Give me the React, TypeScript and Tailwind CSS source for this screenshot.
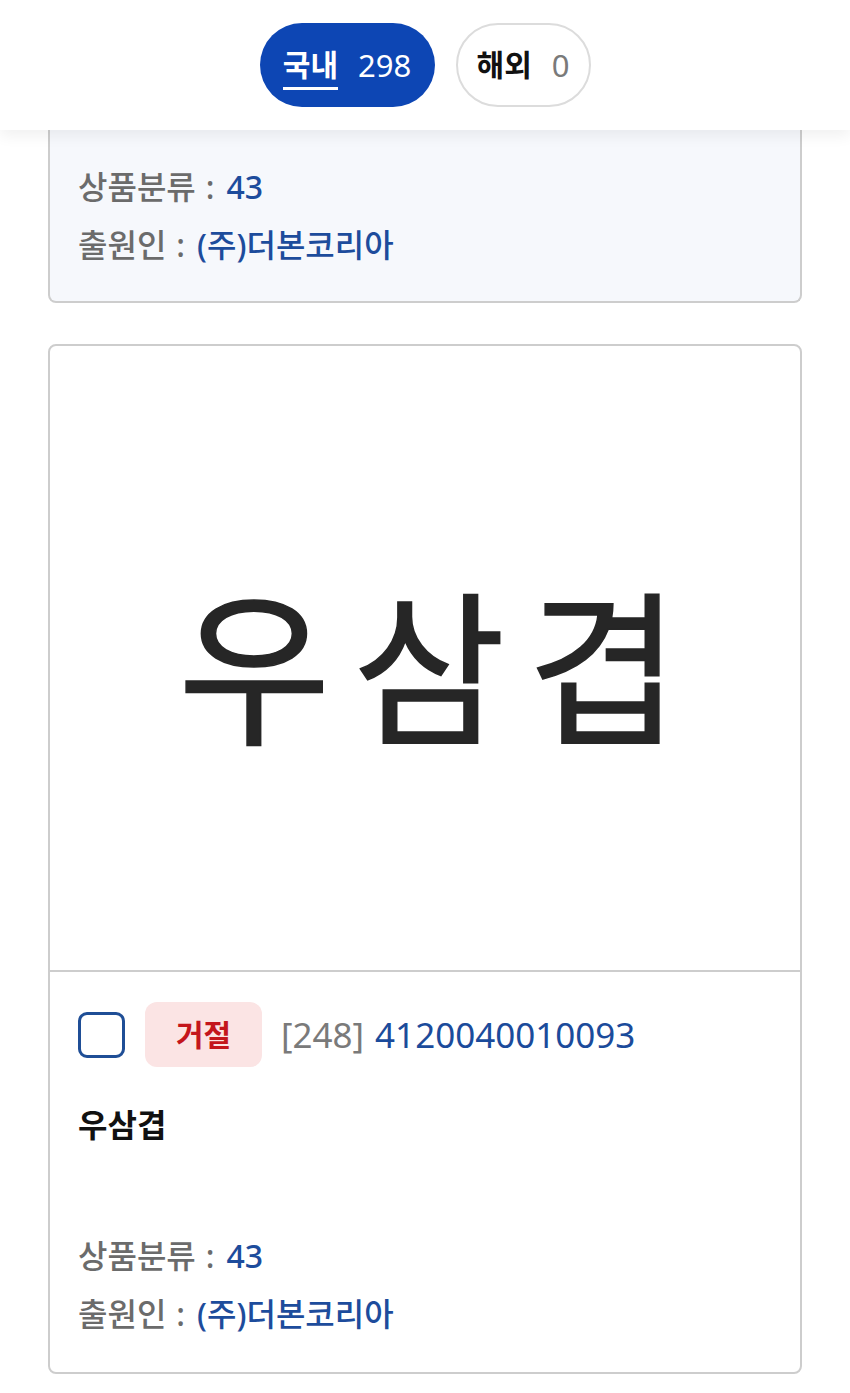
const font = "font-['Noto_Sans','Noto_Sans_CJK_KR',sans-serif]";

function Row({ label, value }: { label: string; value: string }) {
  return (
    <p className="flex items-center">
      <span className="text-[#6b6b6b]">{label}</span>
      <span className="text-[#6b6b6b] ml-[10px] mr-[12px]">:</span>
      <span className="text-[#1d4c9c]">{value}</span>
    </p>
  );
}

function InfoRows() {
  return (
    <div className="text-[32px] leading-[58px] font-medium">
      <Row label="상품분류" value="43" />
      <Row label="출원인" value="(주)더본코리아" />
    </div>
  );
}

export default function App() {
  return (
    <div className={`${font} bg-white min-h-[1393px] w-[850px] overflow-hidden`}>
      {/* Tabs header */}
      <div className="relative z-10 h-[130px] bg-white shadow-[0_6px_14px_rgba(0,0,0,0.06)] flex items-center justify-center gap-[21px]">
        <button className="h-[84px] w-[175px] rounded-full bg-[#0d46b4] flex items-center justify-center gap-[20px]">
          <span className="relative text-[30px] font-bold text-white leading-none">
            국내
            <span className="absolute left-0 right-0 -bottom-[10px] h-[3px] bg-white" />
          </span>
          <span className="text-[31px] text-white leading-none">298</span>
        </button>
        <button className="h-[84px] w-[135px] rounded-full bg-white border-2 border-[#dcdcdc] flex items-center justify-center gap-[20px]">
          <span className="text-[30px] font-bold text-[#111] leading-none">해외</span>
          <span className="text-[31px] text-[#7a7a7a] leading-none">0</span>
        </button>
      </div>

      <div className="px-[48px] flex flex-col gap-[41px]">
        {/* Previous card, cut off by the header */}
        <div className="bg-[#f6f8fc] border-2 border-t-0 border-[#cdcdcd] rounded-b-[8px] pl-[28px] pt-[28px] pb-[27px]">
          <InfoRows />
        </div>

        {/* Card */}
        <div className="border-2 border-[#cdcdcd] rounded-[8px] bg-white overflow-hidden">
          <div className="h-[626px] flex items-center justify-center border-b-2 border-[#cdcdcd]">
            <span className="text-[166px] font-normal text-[#262626] leading-none pt-[20px] tracking-[22px] pl-[30px] [-webkit-text-stroke:1.5px_#262626]">
              우삼겹
            </span>
          </div>
          <div className="pl-[28px] pt-[30px] pb-[29px]">
            <div className="flex items-center h-[65px]">
              <div className="w-[47px] h-[46px] rounded-[9px] border-[3px] border-[#1f4e96]" />
              <span className="ml-[20px] h-[65px] w-[117px] rounded-[12px] bg-[#fbe4e4] flex items-center justify-center text-[30px] font-semibold text-[#c4161c]">
                거절
              </span>
              <span className="ml-[19px] text-[35px] leading-none">
                <span className="text-[#7a7a7a]">[248]</span>
                <span className="text-[#1b4b9b] ml-[11px]">4120040010093</span>
              </span>
            </div>
            <p className="mt-[38px] text-[32px] leading-[40px] font-bold text-[#111]">우삼겹</p>
            <div className="mt-[82px]">
              <InfoRows />
            </div>
          </div>
        </div>
      </div>
    </div>
  );
}
